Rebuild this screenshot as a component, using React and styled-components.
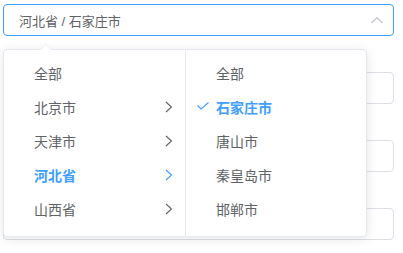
import React from 'react';
import styled, {createGlobalStyle} from 'styled-components';

const provinces = [
  {id: 'all', label: '全部'},
  {id: 'bj', label: '北京市', children: true},
  {id: 'tj', label: '天津市', children: true},
  {id: 'hb', label: '河北省', children: true, active: true},
  {id: 'sx', label: '山西省', children: true}
];

const cities = [
  {id: 'all', label: '全部'},
  {id: 'sjz', label: '石家庄市', active: true, checked: true},
  {id: 'ts', label: '唐山市'},
  {id: 'qhd', label: '秦皇岛市'},
  {id: 'hd', label: '邯郸市'}
];

const ArrowRight = () => (
  <svg width="14" height="14" viewBox="0 0 14 14">
    <polyline points="5,2 10.5,7 5,12" fill="none" stroke="currentColor" strokeWidth="1.1"/>
  </svg>
);

const Check = () => (
  <svg width="14" height="14" viewBox="0 0 14 14">
    <polyline points="1.5,5.5 5,9 12.5,2.5" fill="none" stroke="currentColor" strokeWidth="1.1"/>
  </svg>
);

const ArrowUp = () => (
  <svg width="12" height="7" viewBox="0 0 12 7">
    <polyline points="0.5,6 6,0.8 11.5,6" fill="none" stroke="currentColor" strokeWidth="1.1"/>
  </svg>
);

export default function App() {
  const renderMenu = (items, first) => (
    <Menu first={first}>
      {items.map((item) => (
        <Node key={item.id} active={item.active}>
          {item.checked && <Prefix><Check/></Prefix>}
          <Label>{item.label}</Label>
          {item.children && <Postfix><ArrowRight/></Postfix>}
        </Node>
      ))}
    </Menu>
  );

  return (
    <Page>
      <GlobalStyle/>
      <Form>
        <Field>
          <Input focused>
            <Value>河北省 / 石家庄市</Value>
            <Suffix><ArrowUp/></Suffix>
          </Input>
          <Dropdown>
            {renderMenu(provinces, true)}
            {renderMenu(cities, false)}
          </Dropdown>
        </Field>
        <Field><Input/></Field>
        <Field><Input/></Field>
        <Field><Input/></Field>
      </Form>
    </Page>
  );
}

const GlobalStyle = createGlobalStyle`
  body {
    margin: 0;
    background: #fff;
    font-family: "Liberation Sans", "Noto Sans CJK SC", sans-serif;
  }
`;

const Page = styled.div`
  width: 403px;
  height: 253px;
  padding: 4px 0 0 3px;
  box-sizing: border-box;
  overflow: hidden;
`;

const Form = styled.div`
  display: flex;
  flex-direction: column;
  gap: 36px;
  width: 391px;
`;

const Field = styled.div`
  position: relative;
`;

const Input = styled.div`
  display: flex;
  align-items: center;
  height: 32px;
  box-sizing: border-box;
  padding: 0 10px 0 15px;
  border: 1px solid ${(p) => (p.focused ? '#409EFF' : '#DCDFE6')};
  border-radius: 4px;
  background: #fff;
`;

const Value = styled.div`
  flex: 1;
  font-size: 13px;
  color: #606266;
  white-space: nowrap;
`;

const Suffix = styled.div`
  display: flex;
  color: #C0C4CC;
  margin-top: 1px;
`;

const Dropdown = styled.div`
  position: absolute;
  top: 45px;
  left: 0;
  z-index: 10;
  display: flex;
  height: 188px;
  box-sizing: border-box;
  background: #fff;
  border: 1px solid #E4E7ED;
  border-radius: 4px;
  box-shadow: 0 2px 12px 0 rgba(0, 0, 0, 0.1);

  &::before, &::after {
    content: "";
    position: absolute;
    left: 36px;
    border: 6px solid transparent;
    border-top-width: 0;
  }

  &::before {
    top: -6px;
    border-bottom-color: #EBEEF5;
  }

  &::after {
    top: -5px;
    border-bottom-color: #fff;
  }
`;

const Menu = styled.div`
  width: ${(p) => (p.first ? '182px' : '180px')};
  padding: 6px 0;
  box-sizing: border-box;
  border-right: ${(p) => (p.first ? '1px solid #E4E7ED' : 'none')};
`;

const Node = styled.div`
  position: relative;
  display: flex;
  align-items: center;
  height: 34px;
  padding: 0 30px 0 20px;
  font-size: 14px;
  color: ${(p) => (p.active ? '#409EFF' : '#606266')};
  font-weight: ${(p) => (p.active ? 700 : 400)};
`;

const Label = styled.span`
  padding: 0 10px;
  white-space: nowrap;
`;

const Prefix = styled.span`
  position: absolute;
  left: 10px;
  top: 10px;
  display: flex;
`;

const Postfix = styled.span`
  position: absolute;
  right: 10px;
  top: 10px;
  display: flex;
`;
